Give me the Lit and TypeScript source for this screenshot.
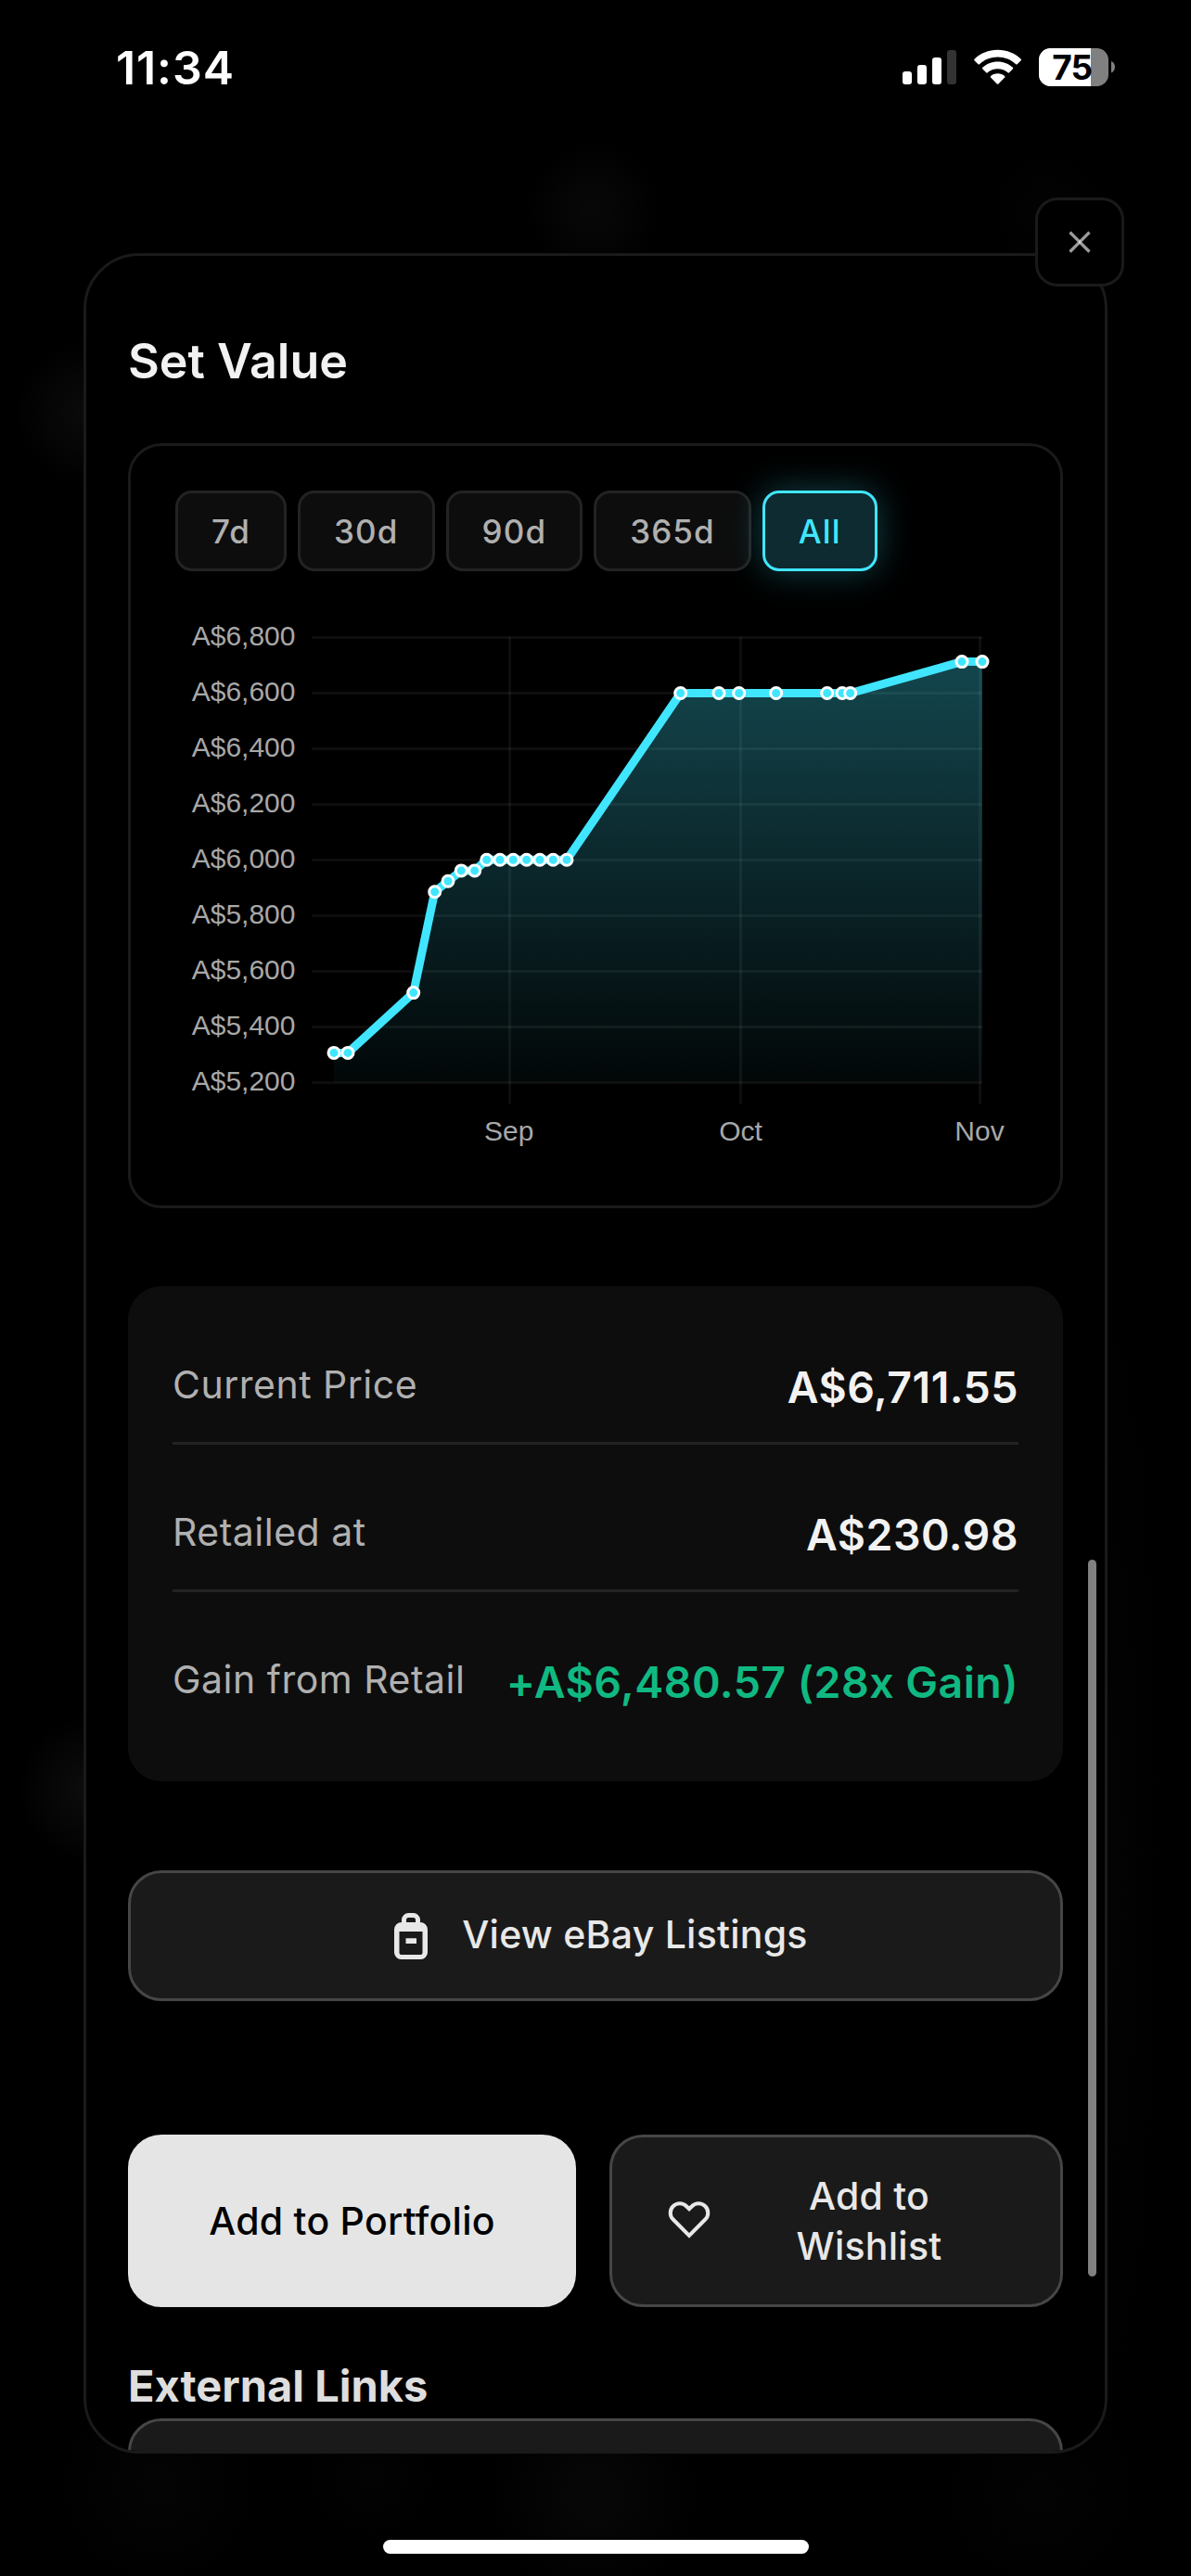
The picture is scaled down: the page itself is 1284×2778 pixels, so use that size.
import { LitElement, html, svg, css } from "lit";
import { customElement, property } from "lit/decorators.js";
import { classMap } from "lit/directives/class-map.js";

const RANGES = ["7d", "30d", "90d", "365d", "All"];

const Y_TICKS = [6800, 6600, 6400, 6200, 6000, 5800, 5600, 5400, 5200];
const X_TICKS = [
  { label: "Sep", x: 549.5, textX: 548.8 },
  { label: "Oct", x: 798.5, textX: 798.5 },
  { label: "Nov", x: 1056.5, textX: 1056 },
];

// [x, price]
const POINTS: [number, number][] = [
  [360, 5307], [375, 5307], [445.7, 5523], [468.7, 5886], [483, 5924],
  [497.3, 5962], [511.7, 5962], [524.7, 6001], [539, 6001], [553.3, 6001],
  [567.7, 6001], [582, 6001], [596.3, 6001], [611, 6001],
  [733.7, 6600], [775, 6600], [796.7, 6600], [836.7, 6600], [891.7, 6600],
  [908, 6600], [916.7, 6600], [1037, 6713], [1059, 6713],
];

const yOf = (v: number) => 687.5 + (6800 - v) * 0.3;
const money = (v: number) => "A$" + v.toLocaleString("en-US");

@customElement("price-chart")
class PriceChart extends LitElement {
  static styles = css`
    :host { display: block; }
    svg { display: block; width: 906px; height: 600px; }
    .grid { stroke: rgba(255, 255, 255, 0.055); stroke-width: 3; }
    .line { fill: none; stroke: #40e6ff; stroke-width: 9; }
    .dot { fill: #40e6ff; stroke: #fff; stroke-width: 3; }
    .tick { font: 30px "Liberation Sans", Arial, sans-serif; fill: #a8a8a8; }
    .end { text-anchor: end; }
    .mid { text-anchor: middle; }
  `;

  render() {
    const line = POINTS.map(([x, v]) => `${x},${yOf(v).toFixed(1)}`).join(" ");
    return html`<svg viewBox="189 652 906 600">
      <defs>
        <linearGradient id="area" gradientUnits="userSpaceOnUse" x1="0" y1="687" x2="0" y2="1167">
          <stop offset="0" stop-color="#40e6ff" stop-opacity="0.32" />
          <stop offset="1" stop-color="#40e6ff" stop-opacity="0.03" />
        </linearGradient>
      </defs>
      ${Y_TICKS.map((v) => svg`
        <line class="grid" x1="336" x2="1059" y1=${yOf(v)} y2=${yOf(v)}></line>
        <text class="tick end" x="318.5" y=${yOf(v) + 8.5}>${money(v)}</text>`)}
      ${X_TICKS.map((t) => svg`
        <line class="grid" x1=${t.x} x2=${t.x} y1="687" y2="1190.5"></line>
        <text class="tick mid" x=${t.textX} y="1229.500">${t.label}</text>`)}
      <polygon points=${`360,1167 ${line} 1059,1167`} fill="url(#area)"></polygon>
      <polyline class="line" points=${line}></polyline>
      ${POINTS.map(([x, v]) => svg`<circle class="dot" cx=${x} cy=${yOf(v)} r="6"></circle>`)}
    </svg>`;
  }
}

@customElement("status-bar")
class StatusBar extends LitElement {
  static styles = css`
    :host {
      display: flex; justify-content: space-between; height: 146px;
      box-sizing: border-box; padding: 43px 82px 0 125px;
    }
    .time { font-size: 50px; font-weight: 600; line-height: 60px; letter-spacing: 0.9px; color: #fff; }
    .icons { display: block; width: 230px; height: 41px; margin-top: 9px; overflow: visible; }
    .level { font: 700 37px Inter, sans-serif; letter-spacing: -1px; text-anchor: middle; }
  `;

  render() {
    return html`
      <div class="time">11:34</div>
      <svg class="icons" viewBox="972 52 230 41">
        <g fill="#fff">
          <rect x="973" y="77" width="10" height="14" rx="3" />
          <rect x="989" y="70" width="10" height="21" rx="3" />
          <rect x="1005" y="62" width="10" height="29" rx="3" />
          <rect x="1021" y="54" width="10" height="37" rx="3" fill="#333" />
          <path d="M1075.6 53.7C1085.5 53.7 1094.400 57.500 1100.700 63.700Q1101.400 64.400 1100.700 65.200L1096.700 69.200Q1096 69.900 1095.200 69.200C1090 64.300 1083.200 61.500 1075.600 61.500S1061.200 64.300 1056 69.200Q1055.200 69.900 1054.500 69.200L1050.500 65.200Q1049.800 64.400 1050.500 63.700C1056.800 57.500 1065.700 53.700 1075.600 53.700Z" />
          <path d="M1075.600 66.500C1082 66.500 1087.700 68.900 1091.900 72.800Q1092.700 73.500 1092 74.300L1088 78.300Q1087.300 79 1086.500 78.300C1083.600 75.700 1079.800 74.200 1075.600 74.200S1067.600 75.700 1064.700 78.300Q1063.900 79 1063.200 78.300L1059.200 74.300Q1058.500 73.500 1059.300 72.800C1063.500 68.900 1069.200 66.500 1075.600 66.500Z" />
          <path d="M1075.600 79.200C1078.500 79.200 1081.100 80.200 1083.100 82Q1083.900 82.700 1083.200 83.500L1076.400 90.400Q1075.600 91.200 1074.800 90.400L1068 83.500Q1067.300 82.700 1068.100 82C1070.100 80.200 1072.700 79.200 1075.600 79.200Z" />
        </g>
        <clipPath id="shell"><rect x="1120" y="52" width="75" height="41" rx="12.500" /></clipPath>
        <g clip-path="url(#shell)">
          <rect x="1120" y="52" width="75" height="41" fill="#808080" />
          <rect x="1120" y="52" width="56" height="41" fill="#fff" />
        </g>
        <path d="M1198 66C1203.300 68 1203.300 76.500 1198 78.500Z" fill="#808080" />
        <text class="level" x="1155.700" y="86" fill="#000">75</text>
      </svg>`;
  }
}

@customElement("price-row")
class PriceRow extends LitElement {
  @property() label = "";
  @property() value = "";
  @property({ type: Boolean }) gain = false;

  static styles = css`
    :host {
      display: flex; justify-content: space-between; align-items: flex-start;
      box-sizing: border-box; height: 123px; padding-top: 25px;
      border-bottom: 3px solid #232323; white-space: nowrap;
    }
    :host([gain]) { border-bottom: none; height: 120px; }
    .label { font-size: 41px; line-height: 66px; color: #b0b0b0; letter-spacing: 0.5px; }
    .value { font-size: 46.5px; line-height: 73px; font-weight: 600; color: #f2f2f2; letter-spacing: 0.45px; }
    .green { color: #10b981; }
  `;

  render() {
    return html`<span class="label">${this.label}</span>
      <span class=${classMap({ value: true, green: this.gain })}>${this.value}</span>`;
  }
}

@customElement("app-root")
class AppRoot extends LitElement {
  static styles = css`
    :host {
      display: block; position: relative; width: 1284px; height: 2778px;
      overflow: hidden; color: #e8e8e8;
      font-family: Inter, "Liberation Sans", sans-serif;
      background:
        radial-gradient(circle 75px at 640px 225px, #080808, transparent),
        radial-gradient(circle 70px at 1130px 225px, #030303, transparent),
        radial-gradient(circle 80px at 95px 445px, #0b0b0b, transparent),
        radial-gradient(circle 80px at 98px 1930px, #0d0d0d, transparent),
        radial-gradient(circle 120px at 640px 2690px, #070707, transparent),
        radial-gradient(circle 120px at 170px 2680px, #040404, transparent),
        radial-gradient(circle 80px at 400px 2670px, #030303, transparent),
        radial-gradient(circle 120px at 1120px 2690px, #030303, transparent),
        radial-gradient(ellipse 60px 700px at 1200px 2000px, #030303, transparent),
        #000;
    }
    .modal {
      box-sizing: border-box; width: 1104px; height: 2373px;
      margin: 127px 0 0 90px; padding: 83px 45px 0;
      border: 3px solid #1a1a1a; border-radius: 60px;
      background: #000; overflow: hidden;
    }
    h2, h3 { margin: 0; font-weight: 600; white-space: nowrap; }
    h2 { font-size: 52px; line-height: 62px; margin-bottom: 57px; color: #f2f2f2; }
    h3 { font-size: 47px; font-weight: 700; line-height: 58px; margin: 56px 0 6px; color: #dedede; }
    .chart-card {
      box-sizing: border-box; height: 825px; padding: 48px;
      border: 3px solid #1a1a1a; border-radius: 36px;
    }
    .ranges { display: flex; gap: 12px; margin-bottom: 36px; }
    .range {
      box-sizing: border-box; height: 87px; padding: 0 36px;
      border: 3px solid #232323; border-radius: 18px; background: #0d0d0d;
      color: #b0b0b0; font: 500 35px/82px Inter, sans-serif; letter-spacing: 1.1px;
      white-space: nowrap;
    }
    .range.active {
      background: #0d2b30; border-color: #40e6ff; color: #40e6ff;
      box-shadow: 0 0 36px rgba(64, 230, 255, 0.3);
    }
    .details {
      display: flex; flex-direction: column; gap: 36px; box-sizing: border-box;
      height: 534px; margin-top: 84px; padding: 48px;
      border-radius: 36px; background: #0d0d0d;
    }
    .btn {
      box-sizing: border-box; display: flex; align-items: center; justify-content: center;
      border: 3px solid #464646; border-radius: 36px; background: #1a1a1a;
      color: #e8e8e8; font: 500 41px/54px Inter, sans-serif; padding: 0;
      letter-spacing: 0.25px;
    }
    .ebay { width: 100%; height: 141px; margin-top: 96px; gap: 25px; }
    .ebay span { padding-bottom: 3px; }
    .bag { width: 60px; height: 60px; }
    .actions { display: grid; grid-template-columns: 483px 489px; gap: 36px; height: 186px; margin-top: 144px; }
    .primary { background: #e5e5e5; border-color: #e5e5e5; color: #000; }
    .wish { padding: 0 96px 0 56px; }
    .wish span { flex: 1; margin-left: 57px; text-align: center; }
    .heart { width: 54px; height: 54px; margin-bottom: 6px; flex: none; }
    .link { width: 100%; height: 141px; }
    .close {
      position: absolute; left: 1116px; top: 213px; width: 96px; height: 96px;
      box-sizing: border-box; border: 3px solid #1a1a1a; border-radius: 24px;
      background: #000; padding: 0; display: grid; place-items: center;
    }
    .close svg { width: 24px; height: 24px; }
    .scroll {
      position: absolute; left: 1173px; top: 1682px; width: 9px; height: 773px;
      border-radius: 5px; background: #808080;
    }
    .home {
      position: absolute; left: 413px; top: 2739px; width: 459px; height: 15px;
      border-radius: 8px; background: #fff;
    }
  `;

  render() {
    return html`
      <status-bar></status-bar>
      <main class="modal">
        <h2>Set Value</h2>
        <section class="chart-card">
          <div class="ranges">
            ${RANGES.map((r) => html`<button class=${classMap({ range: true, active: r === "All" })}>${r}</button>`)}
          </div>
          <price-chart></price-chart>
        </section>
        <section class="details">
          <price-row label="Current Price" value="A$6,711.55"></price-row>
          <price-row label="Retailed at" value="A$230.98"></price-row>
          <price-row label="Gain from Retail" value="+A$6,480.57 (28x Gain)" gain></price-row>
        </section>
        <button class="btn ebay">
          <svg class="bag" viewBox="0 0 24 24" fill="currentColor" fill-rule="evenodd">
            <path d="M8 6V5a3 3 0 0 1 3-3h2a3 3 0 0 1 3 3v1a3.200 3.200 0 0 1 3.200 3.200V19a3 3 0 0 1-3 3H7.800a3 3 0 0 1-3-3V9.200A3.200 3.200 0 0 1 8 6ZM10 6h4V5a1 1 0 0 0-1-1h-2a1 1 0 0 0-1 1ZM7 10v9.200a.8.8 0 0 0 .8.8h8.400a.8.8 0 0 0 .8-.8V10ZM9.800 12.900h4.600v2.300h-4.600Z" />
          </svg>
          <span>View eBay Listings</span>
        </button>
        <div class="actions">
          <button class="btn primary">Add to Portfolio</button>
          <button class="btn wish">
            <svg class="heart" viewBox="0 0 24 24" fill="none" stroke="currentColor" stroke-width="1.8">
              <path d="M4.318 6.318a4.500 4.500 0 0 0 0 6.364L12 20.364l7.682-7.682a4.500 4.500 0 0 0-6.364-6.364L12 7.636l-1.318-1.318a4.500 4.500 0 0 0-6.364 0z" />
            </svg>
            <span>Add to Wishlist</span>
          </button>
        </div>
        <h3>External Links</h3>
        <button class="btn link"></button>
      </main>
      <button class="close" aria-label="Close">
        <svg viewBox="0 0 24 24" stroke="#9c9c9c" stroke-width="3.200">
          <path d="M1.500 1.500l21 21M22.500 1.500l-21 21" />
          <path d="M10.800 12h2.400" stroke="#d8d8d8" />
        </svg>
      </button>
      <div class="scroll"></div>
      <div class="home"></div>`;
  }
}
